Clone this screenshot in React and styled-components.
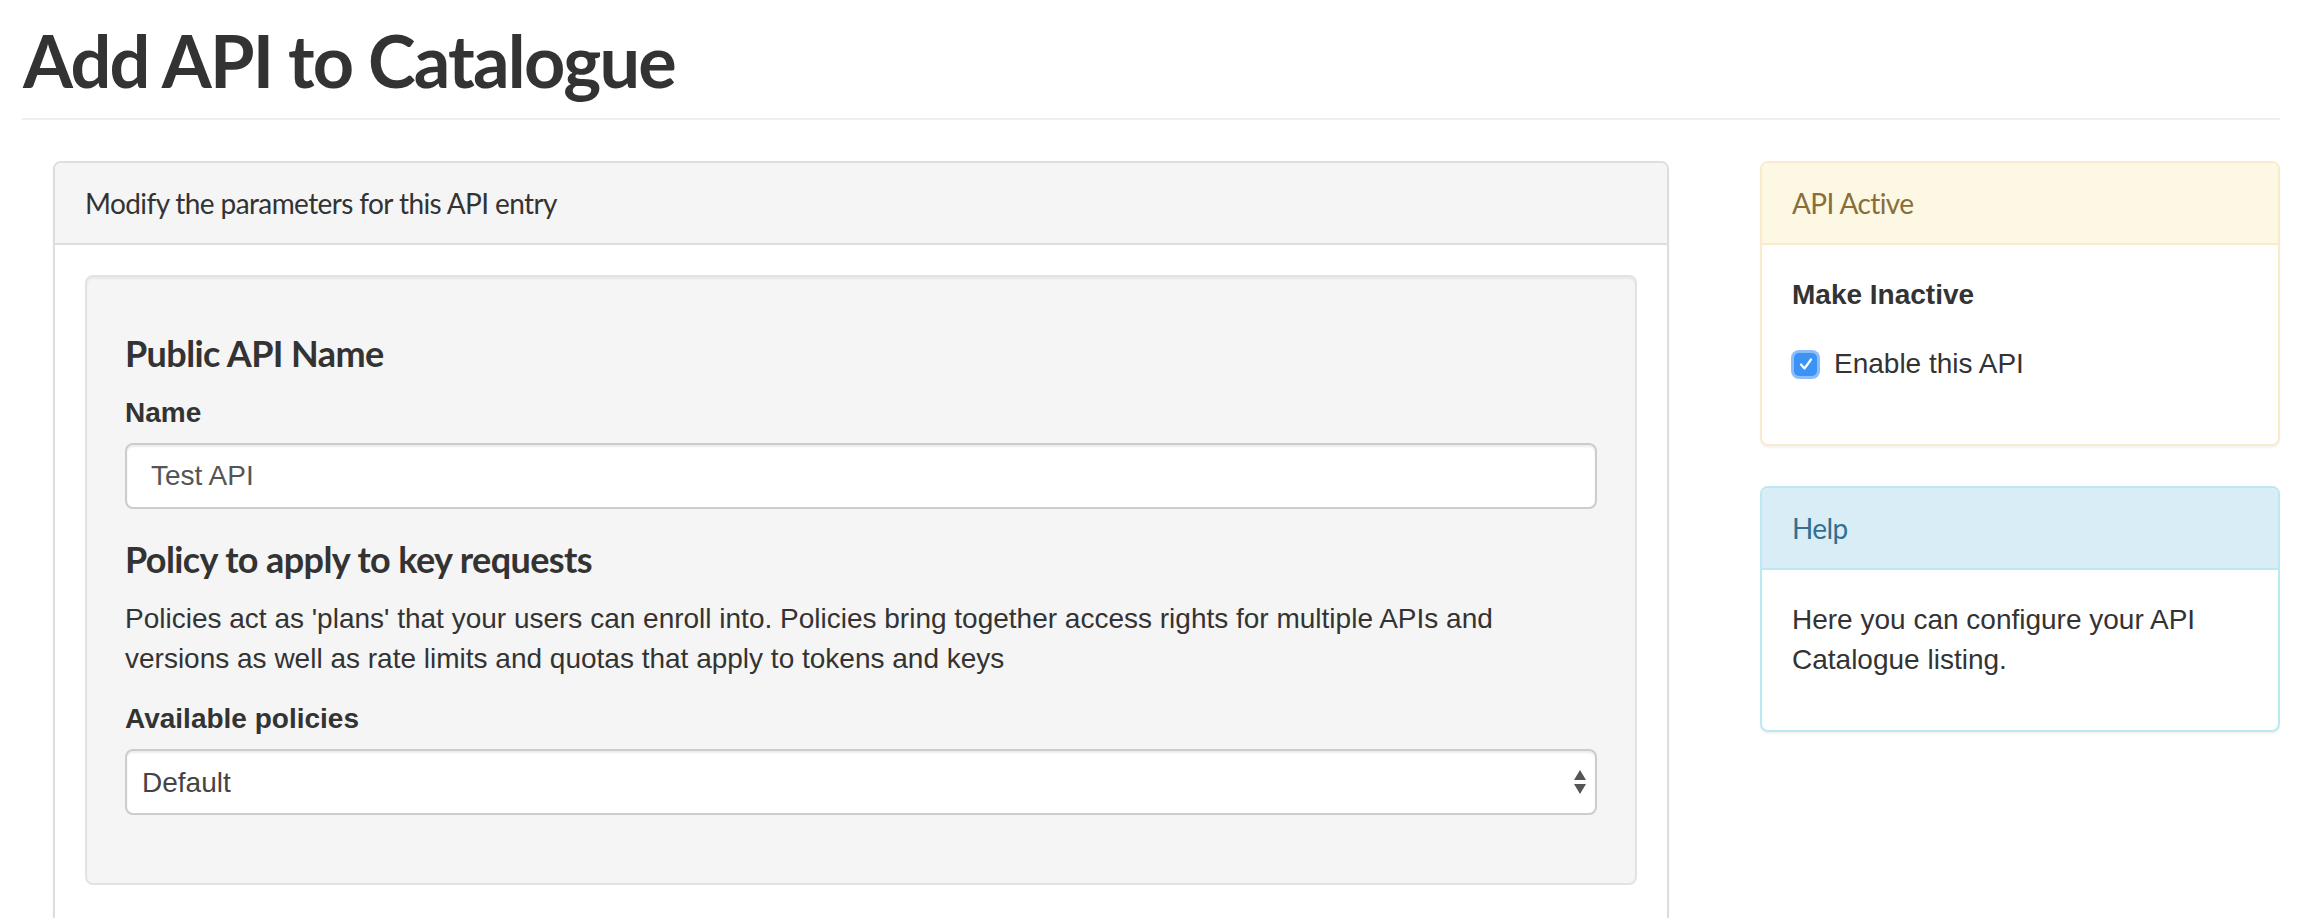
import React from "react";
import styled, { createGlobalStyle, css } from "styled-components";

const GlobalStyle = createGlobalStyle`
  html, body { margin: 0; padding: 0; background: #fff; }
  body {
    font-family: "Liberation Sans", Arial, Helvetica, sans-serif;
    font-size: 28px;
    line-height: 40px;
    color: #333;
  }
  * { box-sizing: border-box; }
`;

const HEAD_FONT = `"Lato", "Open Sans", sans-serif`;

const Page = styled.div`
  padding: 0 22px;
`;

const PageHeader = styled.div`
  padding: 21px 0 18px;
  border-bottom: 2px solid #eee;
  margin-bottom: 41px;
`;

const Title = styled.h1`
  margin: 0;
  font-family: ${HEAD_FONT};
  font-weight: 700;
  font-size: 72px;
  line-height: 79px;
  color: #333;
  padding-left: 1px;
  letter-spacing: -1.8px;
`;

const Row = styled.div`
  display: grid;
  grid-template-columns: 1616px 520px;
  column-gap: 91px;
  padding-left: 31px;
  align-items: start;
`;

const Column = styled.div`
  display: flex;
  flex-direction: column;
  gap: 40px;
`;

const variants = {
  default: { border: "#ddd", bg: "#f5f5f5", color: "#333" },
  warning: { border: "#faebcc", bg: "#fcf8e3", color: "#8a6d3b" },
  info: { border: "#bce8f1", bg: "#d9edf7", color: "#31708f" },
};

const Panel = styled.section`
  background: #fff;
  border: 2px solid ${(p) => variants[p.$variant].border};
  border-radius: 8px;
  box-shadow: 0 2px 2px rgba(0, 0, 0, 0.05);
`;

const PanelHeading = styled.div`
  padding: 20px 30px;
  background: ${(p) => variants[p.$variant].bg};
  color: ${(p) => variants[p.$variant].color};
  border-bottom: 2px solid ${(p) => variants[p.$variant].border};
  border-radius: 6px 6px 0 0;
  font-family: ${HEAD_FONT};
  font-size: 28px;
  line-height: 40px;
  letter-spacing: -0.6px;
`;

const PanelBody = styled.div`
  padding: 30px;
`;

const Well = styled.div`
  background: #f5f5f5;
  border: 2px solid #e3e3e3;
  border-radius: 8px;
  box-shadow: inset 0 2px 2px rgba(0, 0, 0, 0.05);
  padding: 36px 38px 38px;
  margin-bottom: 40px;
`;

const SectionTitle = styled.h4`
  font-family: ${HEAD_FONT};
  font-weight: 700;
  font-size: 36px;
  line-height: 40px;
  margin: ${(p) => (p.$first ? "20px" : "0")} 0 20px;
  color: #333;
  letter-spacing: -0.6px;
`;

const FormGroup = styled.div`
  margin-bottom: 30px;
`;

const Label = styled.label`
  display: block;
  font-weight: 700;
  margin-bottom: 10px;
`;

const Text = styled.p`
  margin: 0 0 20px;
`;

const fieldBase = css`
  display: block;
  width: 100%;
  height: 66px;
  border: 2px solid #ccc;
  border-radius: 8px;
  background: #fff;
  box-shadow: inset 0 2px 2px rgba(0, 0, 0, 0.075);
  font-family: "Liberation Sans", Arial, sans-serif;
  font-size: 28px;
  color: #555;
  outline: none;
`;

const Input = styled.input`
  ${fieldBase}
  padding: 0 24px;
`;

const SelectWrap = styled.div`
  position: relative;
`;

const Select = styled.select`
  ${fieldBase}
  appearance: none;
  -webkit-appearance: none;
  padding: 0 15px;
  color: #444;
`;

const SelectArrows = styled.svg`
  position: absolute;
  right: 10px;
  top: 50%;
  transform: translateY(-50%);
  pointer-events: none;
`;

const CheckRow = styled.label`
  display: flex;
  align-items: center;
  gap: 17px;
  margin-top: 29px;
  margin-left: 2px;
`;

const CheckBox = styled.span`
  flex: none;
  width: 23px;
  height: 23px;
  border-radius: 5px;
  background: #3b94f5;
  box-shadow: 0 0 0 3px rgba(122, 176, 244, 0.85);
  display: flex;
  align-items: center;
  justify-content: center;
`;

const HiddenInput = styled.input`
  position: absolute;
  opacity: 0;
  width: 0;
  height: 0;
`;

export default function App() {
  return (
    <>
      <GlobalStyle />
      <Page>
        <PageHeader>
          <Title>Add API to Catalogue</Title>
        </PageHeader>
        <Row>
          <Panel $variant="default">
            <PanelHeading $variant="default">Modify the parameters for this API entry</PanelHeading>
            <PanelBody>
              <Well>
                <SectionTitle $first>Public API Name</SectionTitle>
                <FormGroup>
                  <Label htmlFor="name">Name</Label>
                  <Input id="name" defaultValue="Test API" />
                </FormGroup>
                <SectionTitle>Policy to apply to key requests</SectionTitle>
                <Text>
                  Policies act as 'plans' that your users can enroll into. Policies bring together access rights
                  for multiple APIs and versions as well as rate limits and quotas that apply to tokens and keys
                </Text>
                <FormGroup>
                  <Label htmlFor="policy">Available policies</Label>
                  <SelectWrap>
                    <Select id="policy" defaultValue="default">
                      <option value="default">Default</option>
                    </Select>
                    <SelectArrows width="14" height="26" viewBox="0 0 14 26">
                      <path d="M7 1 L13 11 L1 11 Z" fill="#555" />
                      <path d="M1 15 L13 15 L7 25 Z" fill="#555" />
                    </SelectArrows>
                  </SelectWrap>
                </FormGroup>
              </Well>
            </PanelBody>
          </Panel>
          <Column>
            <Panel $variant="warning">
              <PanelHeading $variant="warning">API Active</PanelHeading>
              <PanelBody>
                <FormGroup>
                  <Label as="div">Make Inactive</Label>
                  <CheckRow>
                    <HiddenInput type="checkbox" defaultChecked />
                    <CheckBox>
                      <svg width="16" height="16" viewBox="0 0 16 16">
                        <path d="M3 8.5 L6.5 12.5 L13 3.5" fill="none" stroke="#fff" strokeWidth="2.2" strokeLinecap="round" strokeLinejoin="round" />
                      </svg>
                    </CheckBox>
                    Enable this API
                  </CheckRow>
                </FormGroup>
              </PanelBody>
            </Panel>
            <Panel $variant="info">
              <PanelHeading $variant="info">Help</PanelHeading>
              <PanelBody>
                <Text>Here you can configure your API Catalogue listing.</Text>
              </PanelBody>
            </Panel>
          </Column>
        </Row>
      </Page>
    </>
  );
}
